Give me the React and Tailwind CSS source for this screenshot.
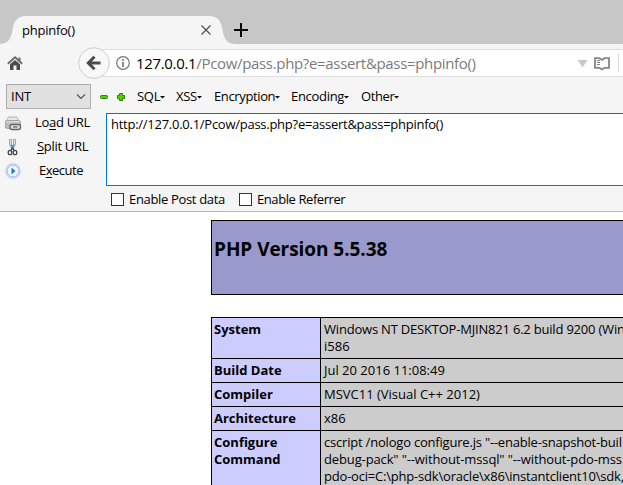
const menus = [
  ['SQL', 'w-[39px]', 'tracking-[-0.3px]'],
  ['XSS', 'w-[38px]', 'tracking-[-0.3px]'],
  ['Encryption', 'w-[77px]', 'tracking-[-0.37px]'],
  ['Encoding', 'w-[70px]', 'tracking-[-0.3px]'],
  ['Other', 'w-[60px]', 'tracking-[-0.4px]'],
];

const rows = [
  ['System', [['Windows NT DESKTOP-MJIN821 6.2 build 9200 (Win', 'tracking-[-0.2px]'], ['i586', '']]],
  ['Build Date', [['Jul 20 2016 11:08:49', '']]],
  ['Compiler', [['MSVC11 (Visual C++ 2012)', '']]],
  ['Architecture', [['x86', '']]],
  ['Configure Command', [
    ['cscript /nologo configure.js "--enable-snapshot-buil', 'tracking-[-0.2px]'],
    ['debug-pack" "--without-mssql" "--without-pdo-mss', 'tracking-[-0.13px]'],
    ['pdo-oci=C:\\php-sdk\\oracle\\x86\\instantclient10\\sdk,', 'tracking-[-0.2px]'],
  ]],
];

function TabStrip() {
  return (
    <div className="relative h-11 shrink-0 bg-[#c7c7c7]">
      <svg className="absolute left-0 top-0" width="260" height="44">
        <path d="M0 44C9 43.500 11 38 12.500 30C14 21 17 16 26 16H209C218 16 221 21 222.500 30C224 38 226 43.500 235 44Z" fill="#f5f5f5" />
        <path d="M201.500 25.500L210.500 34.500M210.500 25.500L201.500 34.500" stroke="#4c4c4c" strokeWidth="1.200" />
        <path d="M234 30H248M241 23V37" stroke="#000" strokeWidth="2" />
      </svg>
      <div className="relative pl-[22px] pt-5 text-[13px] leading-5 tracking-[-0.25px]">phpinfo()</div>
    </div>
  );
}

function NavBar() {
  return (
    <div className="relative h-10 shrink-0 pt-[5px]">
      <div className="ml-[94px] flex h-7 items-center border-y border-[#dedede] bg-white pl-[42px]">
        <span className="whitespace-nowrap text-[15px] leading-6 tracking-[-0.33px] text-[#7b7b7b]">
          <span className="text-black">127.0.0.1</span>/Pcow/pass.php?e=assert&amp;pass=phpinfo()
        </span>
      </div>
      <svg className="absolute left-0 top-0" width="623" height="40">
        <path d="M7.800 19.700L15 13.300L22.200 19.700" fill="none" stroke="#6a6a6a" strokeWidth="1.900" />
        <path d="M10 20.300L15 16L20 20.300V26H16.500V21.500H13.500V26H10Z" fill="#4c4c4c" />
        <path d="M18.500 13.500H20.500V17.500L18.500 15.700Z" fill="#6a6a6a" />
        <circle cx="94" cy="19" r="15.300" fill="#f8f8f8" stroke="#cfcfcf" />
        <path d="M100.500 19H89M94.500 12.800L88.300 19L94.500 25.200" fill="none" stroke="#4c4c4c" strokeWidth="3" />
        <circle cx="123" cy="19" r="6.300" fill="none" stroke="#757575" strokeWidth="1.200" />
        <path d="M123 18V23M123 15V16.800" stroke="#757575" strokeWidth="1.700" />
        <path d="M577.500 16H587.500L582.500 23.500Z" fill="#c9c9c9" />
        <path d="M595 14.200H599.500L602 16L604.500 14.200H609V23.800H604.500L602 25.500L599.500 23.800H595Z" fill="#fff" stroke="#858585" strokeWidth="1.800" />
        <path d="M597 16.500H600M597 18.500H600M597 20.500H600" stroke="#858585" strokeWidth="1" />
        <path d="M618.500 9.500V28.500" stroke="#d8d8d8" />
      </svg>
    </div>
  );
}

function PrinterIcon() {
  return (
    <svg width="18" height="17" viewBox="0 0 18 17">
      <path d="M4.500 2H13L14.500 6H2.500Z" fill="#e8e8e8" stroke="#b5b5b5" />
      <path d="M1.500 6.500Q1.500 5.500 3 5.500H14.500Q16.500 5.500 16.500 7.500V12Q16.500 13.500 14.500 13.500H3.500Q1.500 13.500 1.500 12Z" fill="#bdbdbd" stroke="#a0a0a0" />
      <path d="M2.500 6.800H15.500" stroke="#dedede" strokeWidth="1.300" />
      <rect x="6" y="9.500" width="10.500" height="5" rx="2" fill="#e3e3e3" stroke="#666" strokeWidth="1.400" />
      <path d="M9 12H13.500" stroke="#666" strokeWidth="1.300" />
    </svg>
  );
}

function ScissorsIcon() {
  return (
    <svg width="18" height="20" viewBox="0 0 18 20">
      <path d="M6.500 2V7.500L9.500 12M10.500 2V7.500L7.500 12" fill="none" stroke="#6c97a8" strokeWidth="2.400" />
      <path d="M6.500 2.500V8M10.500 2.500V8" stroke="#cde2ea" strokeWidth="1" />
      <ellipse cx="6" cy="15.500" rx="1.800" ry="2.200" fill="none" stroke="#444" strokeWidth="1.300" />
      <ellipse cx="11" cy="15.500" rx="1.800" ry="2.200" fill="none" stroke="#444" strokeWidth="1.300" />
      <path d="M7 13.300L8.500 11L10 13.300" fill="none" stroke="#444" strokeWidth="1.200" />
    </svg>
  );
}

function PlayIcon() {
  return (
    <svg width="18" height="18" viewBox="0 0 18 18">
      <circle cx="9" cy="9" r="7.200" fill="#fafdff" stroke="#c3d6f3" strokeWidth="1.400" />
      <circle cx="9" cy="9" r="6" fill="#eef6fd" stroke="#9db6de" strokeWidth="1" />
      <path d="M7.500 5.500L11.500 9L7.500 12.500Z" fill="#2878c8" />
    </svg>
  );
}

function HackBar() {
  return (
    <div className="flex h-32 shrink-0 flex-col border-b border-[#b9b9b9] text-[13px]">
      <div className="flex h-[25px] shrink-0 items-center">
        <div className="ml-1.5 flex h-[25px] w-[85px] shrink-0 items-center justify-between border border-[#adadad] bg-[#e1e1e1] px-1">
          <span className="tracking-[-0.2px]">INT</span>
          <svg width="10" height="8"><path d="M1 1.500L5 5.500L9 1.500" fill="none" stroke="#555" strokeWidth="1.200" /></svg>
        </div>
        <svg className="ml-2 shrink-0" width="28" height="12">
          <rect x="1.500" y="4.500" width="7" height="3" rx="1" fill="#55d000" stroke="#298500" />
          <path d="M20.500 2.500H23.500V4.500H25.500V7.500H23.500V9.500H20.500V7.500H18.500V4.500H20.500Z" fill="#55d000" stroke="#298500" />
        </svg>
        <div className="ml-[10px] flex">
          {menus.map(([name, width, tracking]) => (
            <div key={name} className={`flex shrink-0 items-center ${width}`}>
              <span className={tracking}>{name}</span>
              <svg className="shrink-0" width="5" height="4"><path d="M0 1H5L2.500 3.500Z" fill="#000" /></svg>
            </div>
          ))}
        </div>
      </div>
      <div className="flex">
        <div className="w-[106px] shrink-0 pl-1 pt-[2px]">
          <div className="flex h-6 items-center">
            <PrinterIcon />
            <span className="ml-[13px] whitespace-nowrap tracking-[-0.3px]">Lo<u className="underline-offset-2">a</u>d URL</span>
          </div>
          <div className="flex h-6 items-center">
            <ScissorsIcon />
            <span className="ml-[15px] whitespace-nowrap tracking-[-0.3px]"><u className="underline-offset-2">S</u>plit URL</span>
          </div>
          <div className="flex h-[23px] items-center">
            <PlayIcon />
            <span className="ml-[17px] whitespace-nowrap tracking-[-0.5px]">E<u className="underline-offset-2">x</u>ecute</span>
          </div>
        </div>
        <div className="mt-1 min-w-0 flex-1">
          <div className="h-[73px] w-[530px] border border-[#0078d7] bg-white pl-1 leading-5 tracking-[-0.26px]">
            http://127.0.0.1/Pcow/pass.php?e=assert&amp;pass=phpinfo()
          </div>
          <div className="flex h-[27px] items-center pl-[5px]">
            <span className="mr-[5px] size-[13px] border border-[#333] bg-white" />
            <span className="w-[110px] whitespace-nowrap tracking-[-0.33px]">Enable Post data</span>
            <span className="mr-[5px] size-[13px] border border-[#333] bg-white" />
            <span className="whitespace-nowrap tracking-[-0.42px]">Enable Referrer</span>
          </div>
        </div>
      </div>
    </div>
  );
}

function PhpInfo() {
  return (
    <div className="ml-[211px] mt-2 w-[412px] text-[13px] leading-[17px]">
      <div className="h-[75px] border-y border-l border-black bg-[#9999cc] pl-[2px] pt-[15px]">
        <h1 className="text-[19px] font-bold leading-[26px] tracking-[-0.05px]">PHP Version 5.5.38</h1>
      </div>
      <div className="mt-[22px] border-l border-black">
        {rows.map(([label, lines]) => (
          <div key={label} className="flex border-t border-black">
            <div className="w-[108px] shrink-0 bg-[#ccccff] px-[2px] py-[3px] font-bold">{label}</div>
            <div className="min-w-0 flex-1 border-l border-black bg-[#cccccc] py-[3px] pl-[3px]">
              {lines.map(([line, tracking]) => <div key={line} className={`whitespace-nowrap ${tracking}`}>{line}</div>)}
            </div>
          </div>
        ))}
      </div>
    </div>
  );
}

export default function App() {
  return (
    <div className="flex h-[485px] w-[623px] flex-col overflow-hidden bg-white font-['Open_Sans','Noto_Sans',sans-serif] text-black">
      <div className="shrink-0 bg-[#f5f5f5]">
        <TabStrip />
        <NavBar />
        <HackBar />
      </div>
      <PhpInfo />
    </div>
  );
}
